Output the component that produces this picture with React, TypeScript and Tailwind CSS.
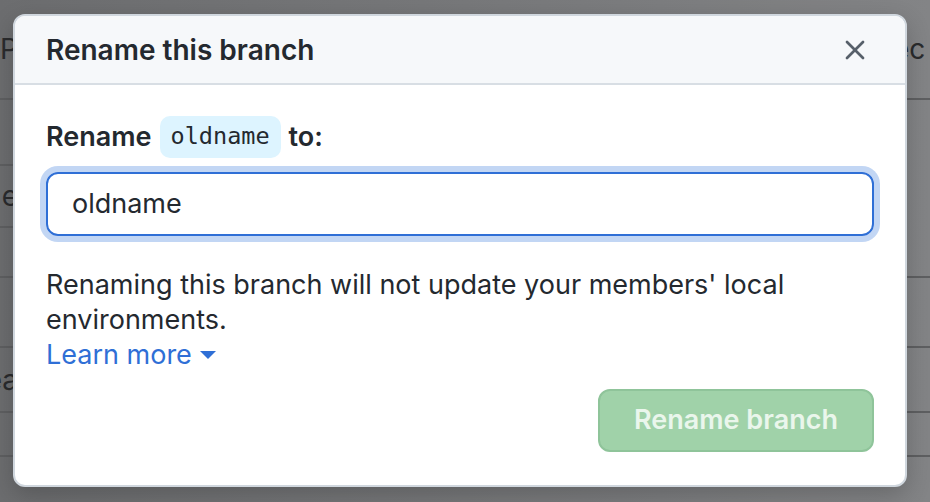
import { X } from "lucide-react"

const sans = "font-['Inter','Liberation_Sans',sans-serif]"

function BgColumn({ rows, align }: { rows: { h: number; text?: string }[]; align: "left" | "right" }) {
  return (
    <div className="flex w-[40px] flex-col">
      {rows.map((row, i) => (
        <div
          key={i}
          style={{ height: row.h }}
          className={`flex shrink-0 items-center overflow-hidden whitespace-nowrap border-b-2 border-[#5e5f61] text-[28px] text-[#2a2b2d] ${
            align === "left" ? "justify-end pr-[22px]" : "justify-start pl-[3px]"
          }`}
        >
          {row.text}
        </div>
      ))}
    </div>
  )
}

export default function App() {
  return (
    <div className={`relative h-[502px] w-[930px] overflow-hidden bg-gradient-to-r from-[#6c6d6f] via-[#77787a] to-[#838486] ${sans}`}>
      <div className="flex h-full justify-between">
        <BgColumn
          align="left"
          rows={[
            { h: 100, text: "P" },
            { h: 66 },
            { h: 62, text: "e" },
            { h: 50 },
            { h: 70 },
            { h: 65, text: "ea" },
            { h: 44 },
          ]}
        />
        <BgColumn
          align="right"
          rows={[{ h: 100, text: "ec" }, { h: 178 }, { h: 70 }, { h: 65 }, { h: 44 }]}
        />
      </div>

      <div className="absolute left-[13px] top-[14px] w-[894px] overflow-hidden rounded-[12px] border-2 border-[#d0d7de] bg-white shadow-[0_8px_24px_rgba(0,0,0,0.2)]">
        <header className="flex h-[69px] items-center justify-between border-b-2 border-[#d8dee4] bg-[#f6f8fa] pl-[31px] pr-[34px]">
          <h2 className="text-[28px] font-semibold text-[#24292f]">Rename this branch</h2>
          <X className="size-[32px] text-[#57606a]" strokeWidth={2} aria-hidden="true" />
        </header>

        <div className="flex flex-col px-[31px] pb-[33px] pt-[31px]">
          <label className="flex h-[42px] items-center gap-[8px] text-[27px] font-semibold text-[#24292f]">
            <span>Rename</span>
            <code className="flex h-[42px] items-center rounded-[10px] bg-[#ddf4ff] px-[11px] font-['DejaVu_Sans_Mono',monospace] text-[23.5px] font-normal text-[#24292f]">
              oldname
            </code>
            <span>to:</span>
          </label>

          <div className="mt-[14px] flex h-[64px] items-center rounded-[12px] border-2 border-[#2f6fd6] px-[24px] text-[27px] text-[#24292f] shadow-[0_0_0_6px_#c2d6f4]">
            oldname
          </div>

          <p className="mt-[31px] text-[27px] leading-[35px] text-[#24292f]">
            Renaming this branch will not update your members' local environments.
          </p>
          <a className="flex items-center gap-[8px] text-[27px] leading-[35px] text-[#2f6fd6]">
            Learn more
            <svg width="16" height="10" viewBox="0 0 16 10" aria-hidden="true">
              <path d="M0 1h16L8 9z" fill="#2f6fd6" />
            </svg>
          </a>

          <div className="mt-[17px] flex justify-end">
            <button className="flex h-[63px] w-[276px] items-center justify-center rounded-[12px] border-2 border-[#8fc49a] bg-[#a0d2a9] text-[27px] font-semibold text-[#eaf6ec]">
              Rename branch
            </button>
          </div>
        </div>
      </div>
    </div>
  )
}
